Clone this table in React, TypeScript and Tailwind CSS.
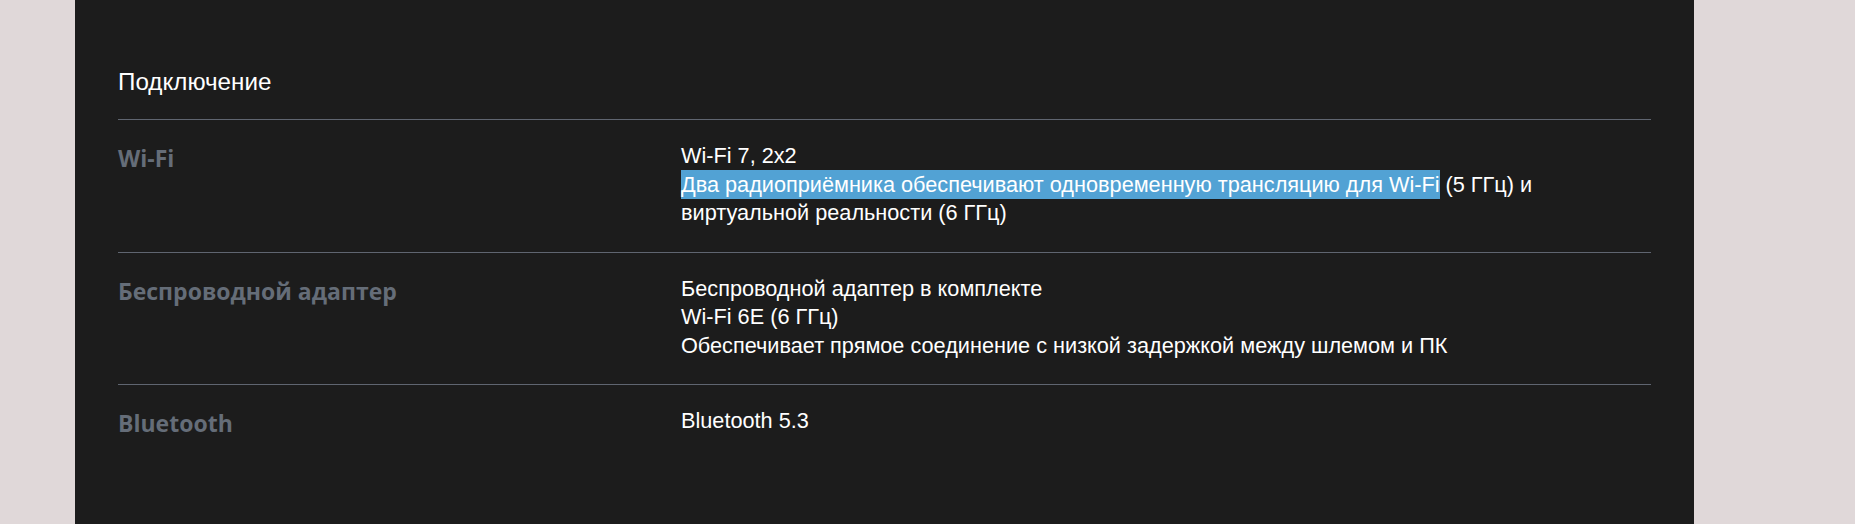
import React from 'react'

const ROWS = [
  { label: 'Wi-Fi', key: 'wifi' },
  { label: 'Беспроводной адаптер', key: 'adapter' },
  { label: 'Bluetooth', key: 'bt' },
]

function Value({ k }: { k: string }) {
  if (k === 'wifi') {
    return (
      <>
        <p>Wi-Fi 7, 2x2</p>
        <p>
          <span className="bg-[#52a2d4] py-[2px]">
            Два радиоприёмника обеспечивают одновременную трансляцию для Wi-Fi
          </span>{' '}
          (5 ГГц) и
          <br />
          виртуальной реальности (6 ГГц)
        </p>
      </>
    )
  }
  if (k === 'adapter') {
    return (
      <>
        <p>Беспроводной адаптер в комплекте</p>
        <p>Wi-Fi 6E (6 ГГц)</p>
        <p>Обеспечивает прямое соединение с низкой задержкой между шлемом и ПК</p>
      </>
    )
  }
  return <p>Bluetooth 5.3</p>
}

export default function App() {
  return (
    <div className="h-[524px] overflow-hidden bg-[#e0d8d9] pl-[75px] pr-[161px]">
      <section className="h-full bg-[#1c1c1c] px-[43px] pt-[66px]">
        <h2 className="font-['Liberation_Sans',Arial,sans-serif] text-[24.2px] leading-8 text-white pb-[21px]">
          Подключение
        </h2>
        <div>
          {ROWS.map(row => (
            <div
              key={row.key}
              className="grid grid-cols-[563px_1fr] border-t border-[#5f6570] pt-[22px] pb-[24px]"
            >
              <div className="font-['Open_Sans',sans-serif] font-bold text-[23px] leading-8 text-[#656d78]">
                {row.label}
              </div>
              <div className="font-['Liberation_Sans',Arial,sans-serif] text-[21.7px] leading-[28.5px] text-white">
                <Value k={row.key} />
              </div>
            </div>
          ))}
        </div>
      </section>
    </div>
  )
}
